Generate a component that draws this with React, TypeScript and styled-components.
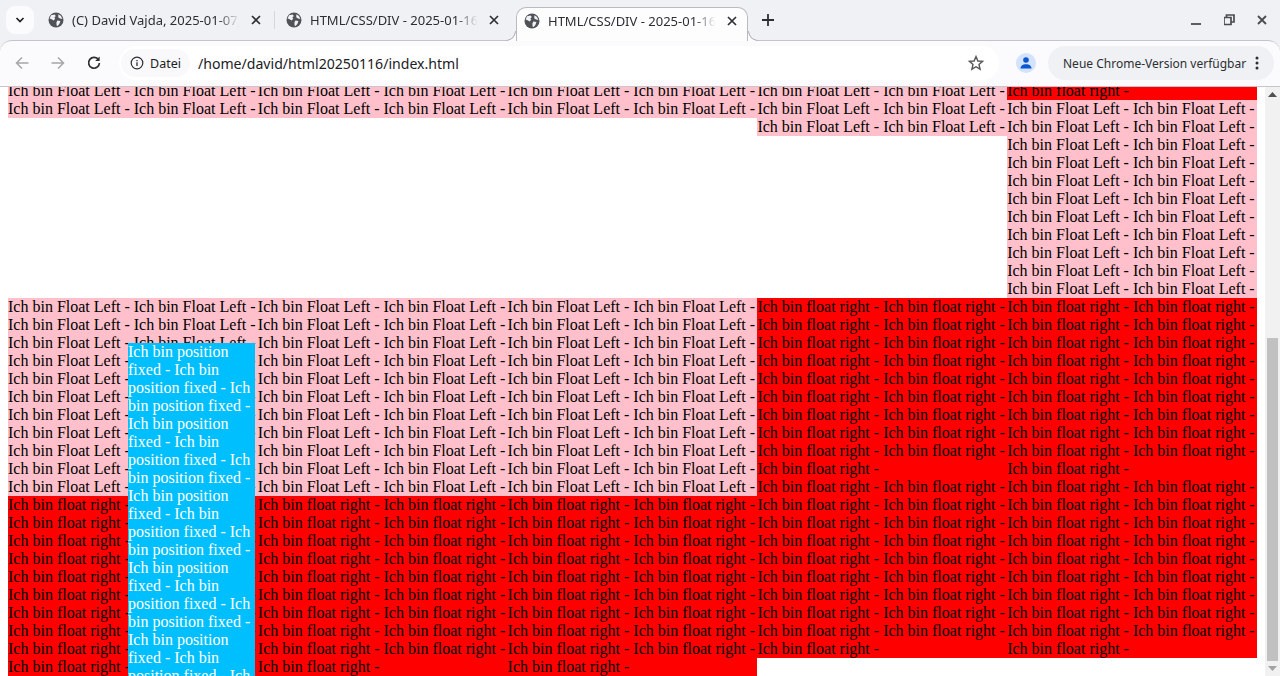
import React from 'react';
import styled, { createGlobalStyle } from 'styled-components';

const GlobalStyle = createGlobalStyle`
  html, body {
    margin: 0;
    height: 100%;
    overflow: hidden;
    background: #fff;
  }
`;

const Window = styled.div`
  width: 1280px;
  height: 676px;
  display: flex;
  flex-direction: column;
  overflow: hidden;
  background: #eff1f4;
  font-family: 'Noto Sans', sans-serif;
`;

const TabStrip = styled.div`
  height: 40px;
  flex: none;
  display: flex;
  align-items: flex-end;
  padding-left: 6px;
  color: #2d2f33;
`;

const TabSearch = styled.button`
  width: 28px;
  height: 28px;
  margin: 0 8px 6px 0;
  padding: 0;
  border: 0;
  border-radius: 9px;
  background: #fbfbfd;
  display: flex;
  align-items: center;
  justify-content: center;
`;

const Tab = styled.div<{ $width: number; $left: number; $right: number }>`
  box-sizing: border-box;
  width: ${(p) => p.$width}px;
  height: 33px;
  flex: none;
  display: flex;
  align-items: center;
  gap: 8px;
  padding: 0 ${(p) => p.$right}px 7px ${(p) => p.$left}px;
  font-size: 13px;
`;

const ActiveTab = styled(Tab)`
  position: relative;
  z-index: 1;
  height: 34px;
  margin-bottom: -1px;
  padding-bottom: 8px;
  background: #fdfdfe;
  border: 1px solid #b9bbc0;
  border-bottom: 0;
  border-radius: 10px 10px 0 0;

  &::before,
  &::after {
    content: '';
    position: absolute;
    bottom: 0;
    width: 10px;
    height: 10px;
  }

  &::before {
    left: -11px;
    background: radial-gradient(circle at 0 0, #eff1f4 8.5px, #b9bbc0 9px, #b9bbc0 9.6px, #fdfdfe 10.2px);
  }

  &::after {
    right: -11px;
    background: radial-gradient(circle at 100% 0, #eff1f4 8.5px, #b9bbc0 9px, #b9bbc0 9.6px, #fdfdfe 10.2px);
  }
`;

const TabTitle = styled.span`
  flex: 1;
  min-width: 0;
  overflow: hidden;
  white-space: nowrap;
  mask-image: linear-gradient(to right, #000 85%, transparent 98%);
`;

const TabDivider = styled.span`
  width: 1px;
  height: 18px;
  margin-bottom: 11px;
  flex: none;
  background: #d5d7db;
`;

const NewTab = styled.div`
  margin: 0 0 7px 8px;
  width: 24px;
  height: 26px;
  display: flex;
  align-items: center;
  justify-content: center;
`;

const WindowControls = styled.div`
  align-self: flex-start;
  height: 12px;
  margin: 14px 13px 0 auto;
  display: flex;
  align-items: center;
  gap: 21px;
`;

const Toolbar = styled.div`
  height: 47px;
  flex: none;
  box-sizing: border-box;
  display: flex;
  align-items: center;
  padding: 0 6px 1px 12px;
  background: #fbfbfd;
  border-top: 1px solid #c3c5ca;
  border-bottom: 1px solid #c6c7cb;
  border-radius: 12px 12px 0 0;
`;

const NavIcon = styled.div`
  width: 20px;
  height: 20px;
  margin-right: 16px;
  display: flex;
  align-items: center;
  justify-content: center;
`;

const Omnibox = styled.div`
  width: 880px;
  height: 34px;
  margin-left: -1px;
  flex: none;
  display: flex;
  align-items: center;
  border-radius: 17px;
  background: #fff;
  font-size: 14.1px;
  color: #202124;
`;

const SecurityChip = styled.div`
  height: 28px;
  margin-left: 2px;
  padding: 0 9px;
  display: flex;
  align-items: center;
  gap: 6px;
  border-radius: 14px;
  background: #f9f9fb;
  font-size: 12.5px;
`;

const Address = styled.span`
  margin-left: 8px;
`;

const Star = styled.div`
  margin-left: auto;
  margin-right: 14px;
  display: flex;
`;

const Profile = styled.div`
  width: 20px;
  height: 20px;
  margin-left: 17px;
  border-radius: 50%;
  background: #d3e3fd;
  display: flex;
  align-items: center;
  justify-content: center;
`;

const UpdatePill = styled.div`
  box-sizing: border-box;
  width: 226px;
  height: 34px;
  margin-left: 12px;
  padding: 0 15px;
  display: flex;
  align-items: center;
  justify-content: space-between;
  border-radius: 17px;
  background: #eff1f4;
  font-size: 12px;
  color: #2d2f33;
`;

const Content = styled.div`
  flex: 1;
  min-height: 0;
  position: relative;
  display: flex;
  background: #fff;
`;

const Viewport = styled.div`
  flex: 1;
  min-width: 0;
  overflow: hidden;
  padding-left: 8px;
  font: 16px/18px 'Liberation Serif', serif;
  color: #000;
`;

const Sheet = styled.div`
  margin-top: -5px;
  display: flex;
  flex-direction: column;
`;

const Band = styled.div<{ $height: number }>`
  height: ${(p) => p.$height}px;
  display: grid;
  grid-template-columns: repeat(5, 249.8px);
  align-items: start;
`;

const Column = styled.div`
  display: flex;
  flex-direction: column;
`;

const Block = styled.div<{ $tone: 'pink' | 'red' }>`
  background: ${(p) => (p.$tone === 'pink' ? '#ffc0cb' : '#ff0000')};
`;

const FixedBox = styled.div`
  position: absolute;
  left: 128px;
  top: 256px;
  bottom: 0;
  width: 127px;
  overflow: hidden;
  background: #00bfff;
  color: #fff;
  font: 16px/18px 'Liberation Serif', serif;
`;

const Scrollbar = styled.div`
  width: 15px;
  flex: none;
  display: flex;
  flex-direction: column;
  align-items: center;
  background: #f1f1f1;
`;

const ScrollArrow = styled.div`
  height: 15px;
  flex: none;
  display: flex;
  align-items: center;
  justify-content: center;
`;

const ScrollTrack = styled.div`
  flex: 1;
  align-self: stretch;
  display: flex;
  flex-direction: column;
  justify-content: flex-end;
  padding: 0 2px;
`;

const ScrollThumb = styled.div`
  height: 323px;
  background: #c1c1c1;
`;

const repeat = (phrase: string, count: number) => Array(count).fill(phrase).join(' ');
const left = (lines: number) => repeat('Ich bin Float Left -', lines * 2);
const right = (lines: number) => repeat('Ich bin float right -', lines * 2 - 1);

const Globe = () => (
  <svg width="16" height="16" viewBox="0 0 16 16" style={{ flex: 'none' }}>
    <circle cx="8" cy="8" r="7.5" fill="#4f5257" />
    <path
      d="M3 3.2 6.6 2.4 7.8 4 6.4 5.6 7.2 6.8 5.6 8.6 3.6 7.2 1.6 6.4ZM9.4 8.4 12.4 9 11.6 11.6 9.8 14 8.6 13.6 8.4 10.6ZM10.4 2.2 13 4 14.4 7 12 6.4 10.2 5.2Z"
      fill="#eff1f4"
    />
  </svg>
);

const CloseIcon = () => (
  <svg width="10" height="10" viewBox="0 0 10 10" style={{ flex: 'none' }}>
    <path d="M1 1 9 9M9 1 1 9" stroke="#2d2f33" strokeWidth="1.7" />
  </svg>
);

export default function App() {
  return (
    <Window>
      <GlobalStyle />
      <TabStrip>
        <TabSearch>
          <svg width="10" height="8" viewBox="0 0 10 8">
            <path d="M1.5 2 5 5.5 8.5 2" fill="none" stroke="#1f2023" strokeWidth="1.7" />
          </svg>
        </TabSearch>
        <Tab $width={232} $left={6} $right={13}>
          <Globe />
          <TabTitle>(C) David Vajda, 2025-01-07_</TabTitle>
          <CloseIcon />
        </Tab>
        <TabDivider />
        <Tab $width={241} $left={11} $right={17}>
          <Globe />
          <TabTitle>HTML/CSS/DIV - 2025-01-16</TabTitle>
          <CloseIcon />
        </Tab>
        <ActiveTab $width={232} $left={7} $right={10}>
          <Globe />
          <TabTitle>HTML/CSS/DIV - 2025-01-16</TabTitle>
          <CloseIcon />
        </ActiveTab>
        <NewTab>
          <svg width="12" height="12" viewBox="0 0 12 12">
            <path d="M6 0V12M0 6H12" stroke="#2d2f33" strokeWidth="1.8" />
          </svg>
        </NewTab>
        <WindowControls>
          <svg width="12" height="10" viewBox="0 0 12 10">
            <path d="M0 9H10" stroke="#4a4c50" strokeWidth="1.8" />
          </svg>
          <svg width="12" height="12" viewBox="0 0 12 12">
            <path d="M0 3.5V10.5H7V3.5ZM2.5 3V1H10V8H7.5" fill="none" stroke="#4a4c50" strokeWidth="1.7" />
          </svg>
          <svg width="10" height="10" viewBox="0 0 10 10">
            <path d="M1 1 9 9M9 1 1 9" stroke="#4a4c50" strokeWidth="1.8" />
          </svg>
        </WindowControls>
      </TabStrip>
      <Toolbar>
        <NavIcon>
          <svg width="16" height="16" viewBox="0 0 16 16">
            <path d="M14.5 8H2.5M8 2.5 2.5 8 8 13.5" fill="none" stroke="#a5a7ab" strokeWidth="1.5" />
          </svg>
        </NavIcon>
        <NavIcon>
          <svg width="16" height="16" viewBox="0 0 16 16">
            <path d="M1.5 8H13.5M8 2.5 13.5 8 8 13.5" fill="none" stroke="#a5a7ab" strokeWidth="1.5" />
          </svg>
        </NavIcon>
        <NavIcon>
          <svg width="16" height="16" viewBox="0 0 16 16">
            <path d="M12.6 5A5.4 5.4 0 1 0 13.4 8" fill="none" stroke="#2d2f33" strokeWidth="1.7" />
            <path d="M13.6 1.6V6H9.2Z" fill="#2d2f33" />
          </svg>
        </NavIcon>
        <Omnibox>
          <SecurityChip>
            <svg width="14" height="14" viewBox="0 0 14 14">
              <circle cx="7" cy="7" r="5.8" fill="none" stroke="#2d2f33" strokeWidth="1.2" />
              <path d="M7 6.2V10M7 4V5.2" stroke="#2d2f33" strokeWidth="1.3" />
            </svg>
            Datei
          </SecurityChip>
          <Address>/home/david/html20250116/index.html</Address>
          <Star>
            <svg width="18" height="18" viewBox="0 0 18 18">
              <path
                d="M9 2.6 10.9 7 15.6 7.4 12 10.5 13.1 15.2 9 12.7 4.9 15.2 6 10.5 2.4 7.4 7.1 7Z"
                fill="none"
                stroke="#55575b"
                strokeWidth="1.4"
              />
            </svg>
          </Star>
        </Omnibox>
        <Profile>
          <svg width="14" height="14" viewBox="0 0 14 14">
            <circle cx="7" cy="4" r="2.8" fill="#0b57d0" />
            <path d="M1.5 12.6C1.5 9.6 4 8.2 7 8.2S12.5 9.6 12.5 12.6Z" fill="#0b57d0" />
          </svg>
        </Profile>
        <UpdatePill>
          Neue Chrome-Version verfügbar
          <svg width="4" height="14" viewBox="0 0 4 14">
            <circle cx="2" cy="2" r="1.5" fill="#2d2f33" />
            <circle cx="2" cy="7" r="1.5" fill="#2d2f33" />
            <circle cx="2" cy="12" r="1.5" fill="#2d2f33" />
          </svg>
        </UpdatePill>
      </Toolbar>
      <Content>
        <Viewport>
          <Sheet>
            <Band $height={216}>
              <Column>
                <Block $tone="pink">{left(2)}</Block>
              </Column>
              <Column>
                <Block $tone="pink">{left(2)}</Block>
              </Column>
              <Column>
                <Block $tone="pink">{left(2)}</Block>
              </Column>
              <Column>
                <Block $tone="pink">{left(3)}</Block>
              </Column>
              <Column>
                <Block $tone="red">{right(1)}</Block>
                <Block $tone="pink">{left(11)}</Block>
              </Column>
            </Band>
            <Band $height={400}>
              <Column>
                <Block $tone="pink">{left(11)}</Block>
                <Block $tone="red">{right(10)}</Block>
              </Column>
              <Column>
                <Block $tone="pink">{left(11)}</Block>
                <Block $tone="red">{right(10)}</Block>
              </Column>
              <Column>
                <Block $tone="pink">{left(11)}</Block>
                <Block $tone="red">{right(10)}</Block>
              </Column>
              <Column>
                <Block $tone="red">{right(10)}</Block>
                <Block $tone="red">{right(10)}</Block>
              </Column>
              <Column>
                <Block $tone="red">{right(10)}</Block>
                <Block $tone="red">{right(10)}</Block>
              </Column>
            </Band>
          </Sheet>
        </Viewport>
        <FixedBox>{repeat('Ich bin position fixed -', 16)}</FixedBox>
        <Scrollbar>
          <ScrollArrow>
            <svg width="9" height="5" viewBox="0 0 9 5">
              <path d="M4.5 0 9 5H0Z" fill="#505050" />
            </svg>
          </ScrollArrow>
          <ScrollTrack>
            <ScrollThumb />
          </ScrollTrack>
          <ScrollArrow>
            <svg width="9" height="5" viewBox="0 0 9 5">
              <path d="M0 0H9L4.5 5Z" fill="#a3a3a3" />
            </svg>
          </ScrollArrow>
        </Scrollbar>
      </Content>
    </Window>
  );
}
